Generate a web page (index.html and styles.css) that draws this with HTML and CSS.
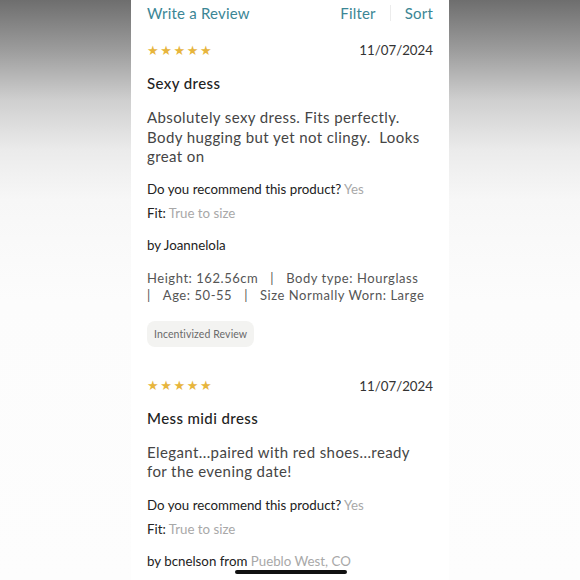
FILE: index.html
```html
<!DOCTYPE html>
<html>
<head>
<meta charset="utf-8">
<link rel="stylesheet" href="styles.css">
</head>
<body>
<div class="screen">
  <div class="toolbar">
    <span class="link">Write a Review</span>
    <div class="tools">
      <span class="link">Filter</span>
      <span class="divider"></span>
      <span class="link">Sort</span>
    </div>
  </div>

  <div class="review">
    <div class="meta">
      <span class="stars">★★★★★</span>
      <span class="date">11/07/2024</span>
    </div>
    <h2 class="title">Sexy dress</h2>
    <p class="body">Absolutely sexy dress. Fits perfectly.<br>Body hugging but yet not clingy.&nbsp; Looks<br>great on</p>
    <p class="q">Do you recommend this product? <span class="ans">Yes</span></p>
    <p class="q fit">Fit: <span class="ans">True to size</span></p>
    <p class="author">by Joannelola</p>
    <p class="traits">Height: 162.56cm<span class="sep">|</span>Body type: Hourglass<br><span class="sep first">|</span>Age: 50-55<span class="sep">|</span>Size Normally Worn: Large</p>
    <span class="badge">Incentivized Review</span>
  </div>

  <div class="review second">
    <div class="meta">
      <span class="stars">★★★★★</span>
      <span class="date">11/07/2024</span>
    </div>
    <h2 class="title">Mess midi dress</h2>
    <p class="body">Elegant...paired with red shoes...ready<br>for the evening date!</p>
    <p class="q">Do you recommend this product? <span class="ans">Yes</span></p>
    <p class="q fit">Fit: <span class="ans">True to size</span></p>
    <p class="author">by bcnelson from <span class="ans">Pueblo West, CO</span></p>
  </div>

  <div class="home-indicator"></div>
</div>
</body>
</html>
```

FILE: styles.css
```css
* { box-sizing: border-box; }
html, body { margin: 0; padding: 0; }
body {
  width: 580px;
  height: 580px;
  overflow: hidden;
  background: linear-gradient(to bottom, #6e6e6e 0px, #9c9c9c 50px, #cfcfcf 100px, #ebebeb 150px, #f7f7f7 200px, #fcfcfc 300px, #fdfdfd 580px);
  font-family: Lato, "Open Sans", sans-serif;
}
.screen {
  position: relative;
  margin-left: 131px;
  width: 318px;
  height: 580px;
  background: #fff;
  padding: 0 16px;
  overflow: hidden;
}
.toolbar {
  display: flex;
  justify-content: space-between;
  align-items: center;
  height: 25px;
}
.link {
  color: #3b8695;
  font-size: 15px;
  letter-spacing: 0.2px;
}
.tools { display: flex; align-items: center; }
.divider {
  width: 1px;
  height: 16px;
  background: #ececec;
  margin: 0 14px;
}
.review { padding-top: 15px; }
.review.second { padding-top: 29px; }
.meta {
  display: flex;
  justify-content: space-between;
  align-items: center;
  height: 20px;
}
.stars {
  color: #e7b53c;
  font-size: 13px;
  letter-spacing: 1.6px;
  font-family: "DejaVu Sans", sans-serif;
}
.date {
  color: #333;
  font-size: 13.3px;
  letter-spacing: 0;
}
.title {
  margin: 13px 0 0 0;
  font-size: 15px;
  font-weight: 500;
  color: #222;
  letter-spacing: 0.4px;
  line-height: 20px;
}
.second .title { margin-top: 12px; }
.body {
  margin: 15px 0 0 0;
  font-size: 15px;
  color: #454545;
  line-height: 19.5px;
  letter-spacing: 0.4px;
}
.q {
  margin: 14px 0 0 0;
  font-size: 13.3px;
  color: #222;
  line-height: 17px;
}
.second .q { margin-top: 15px; }
.q.fit { margin-top: 7px; }
.ans { color: #a8a8a8; }
.author {
  margin: 15px 0 0 0;
  font-size: 13.3px;
  color: #222;
  line-height: 17px;
}
.traits {
  margin: 16px 0 0 0;
  font-size: 13px;
  color: #555;
  line-height: 17.5px;
  letter-spacing: 0.55px;
}
.sep { margin: 0 12px; }
.sep.first { margin-left: 0; }
.badge {
  display: inline-block;
  margin-top: 16px;
  background: #f3f3f1;
  color: #6a6a6a;
  font-size: 10.5px;
  padding: 6px 7px;
  border-radius: 8px;
  line-height: 14px;
  letter-spacing: 0.1px;
}
.home-indicator {
  position: absolute;
  left: 104px;
  bottom: 6px;
  width: 112px;
  height: 4px;
  border-radius: 2px;
  background: #111;
}
```
